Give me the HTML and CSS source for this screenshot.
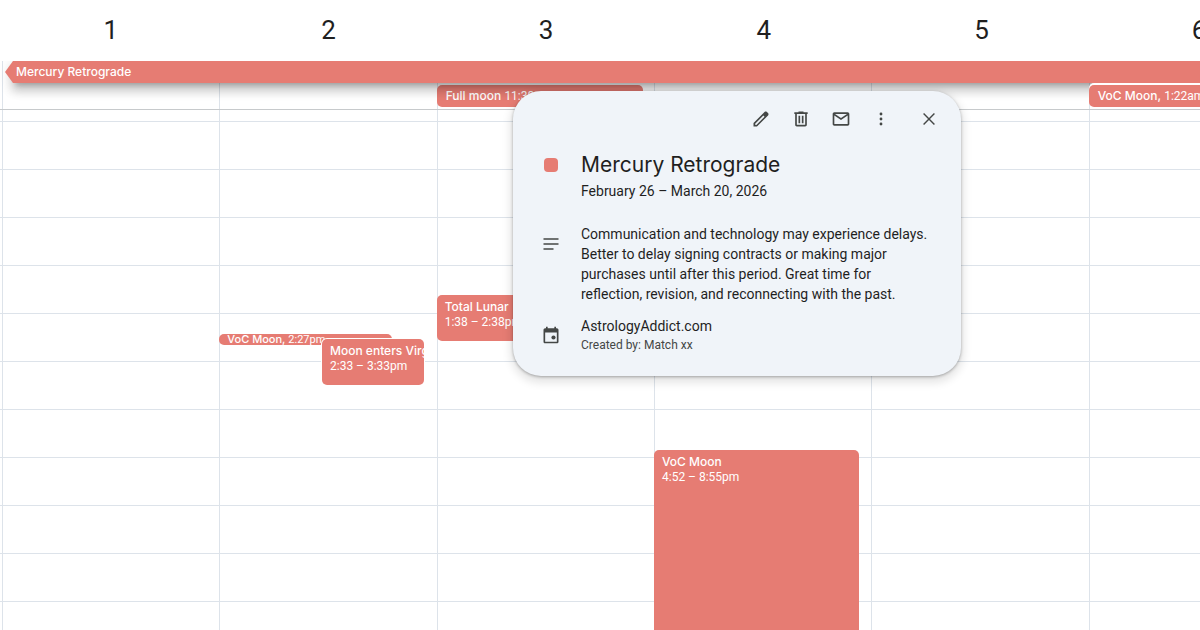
FILE: index.html
```html
<!DOCTYPE html>
<html lang="en">
<head>
    <meta charset="UTF-8">
    <meta name="viewport" content="width=device-width, initial-scale=1.0">
    <title>Calendar - March 2026</title>
    <link rel="stylesheet" href="styles.css">
</head>
<body>
    <main class="calendar">
        <!-- day numbers -->
        <div class="days week">
            <h2>1</h2>
            <h2>2</h2>
            <h2>3</h2>
            <h2>4</h2>
            <h2>5</h2>
            <h2>6</h2>
        </div>

        <!-- all day events -->
        <div class="allday">
            <div class="span-event">Mercury Retrograde</div>
            <div class="allday-row week">
                <div class="cell"></div>
                <div class="cell"></div>
                <div class="cell"><div class="chip">Full moon <span>11:38am</span></div></div>
                <div class="cell"></div>
                <div class="cell"></div>
                <div class="cell"><div class="chip chip-top">VoC Moon, <span>1:22am</span></div></div>
            </div>
        </div>

        <!-- hours -->
        <div class="hours">
            <div class="week">
                <div class="column"></div>
                <div class="column">
                    <div class="event event-short">VoC Moon, <span>2:27pm</span></div>
                    <div class="event event-virgo">Moon enters Virgo<br><span>2:33 – 3:33pm</span></div>
                </div>
                <div class="column">
                    <div class="event event-eclipse">Total Lunar<br><span>1:38 – 2:38pm</span></div>
                </div>
                <div class="column">
                    <div class="event event-voc">VoC Moon<br><span>4:52 – 8:55pm</span></div>
                </div>
                <div class="column"></div>
                <div class="column"></div>
            </div>
        </div>
    </main>

    <!-- event details -->
    <section class="popup" role="dialog" aria-labelledby="event-title">
        <div class="toolbar">
            <button type="button" aria-label="Edit event">
                <svg viewBox="0 0 24 24"><path d="M20.41 4.94l-1.35-1.35c-.78-.78-2.05-.78-2.83 0L3 16.82V21h4.18L20.41 7.77c.79-.78.79-2.05 0-2.83zm-14 14.12L5 19v-1.36l9.82-9.82 1.41 1.41-9.82 9.83z"/></svg>
            </button>
            <button type="button" aria-label="Delete event">
                <svg viewBox="0 0 24 24"><path d="M15 4V3H9v1H4v2h1v13c0 1.1.9 2 2 2h10c1.1 0 2-.9 2-2V6h1V4h-5zm2 15H7V6h10v13z"/><path d="M9 8h2v9H9zm4 0h2v9h-2z"/></svg>
            </button>
            <button type="button" aria-label="Email event details">
                <svg viewBox="0 0 24 24"><path d="M20 4H4c-1.1 0-2 .9-2 2v12c0 1.1.9 2 2 2h16c1.1 0 2-.9 2-2V6c0-1.1-.9-2-2-2zm-.8 2L12 10.8 4.8 6h14.4zM4 18V7.87l8 5.33 8-5.33V18H4z"/></svg>
            </button>
            <button type="button" aria-label="Options">
                <svg viewBox="0 0 24 24"><circle cx="12" cy="6" r="1.7"/><circle cx="12" cy="12" r="1.7"/><circle cx="12" cy="18" r="1.7"/></svg>
            </button>
            <button type="button" class="close" aria-label="Close">
                <svg viewBox="0 0 24 24"><path d="M5.5 5.5l13 13M18.5 5.5l-13 13" fill="none" stroke="#444746" stroke-width="1.7"/></svg>
            </button>
        </div>
        <div class="details">
            <div class="color-dot"></div>
            <div>
                <h1 id="event-title">Mercury Retrograde</h1>
                <p>February 26 – March 20, 2026</p>
            </div>

            <svg class="icon-notes" viewBox="0 0 24 24"><path d="M3 5h18v2H3zM3 11h18v2H3zM3 17h12v2H3z"/></svg>
            <p>Communication and technology may experience delays. Better to delay signing contracts or making major purchases until after this period. Great time for reflection, revision, and reconnecting with the past.</p>

            <svg class="icon-calendar" viewBox="0 0 24 24"><path d="M19 4h-1V2h-2v2H8V2H6v2H5c-1.1 0-2 .9-2 2v14c0 1.1.9 2 2 2h14c1.1 0 2-.9 2-2V6c0-1.1-.9-2-2-2zm0 16H5V9h14v11z"/><circle cx="15" cy="15" r="2.5"/></svg>
            <div>
                <p>AstrologyAddict.com</p>
                <p class="creator">Created by: Match xx</p>
            </div>
        </div>
    </section>
</body>
</html>
```
FILE: styles.css
```css
* {
    box-sizing: border-box;
}

body, html {
    height: 100%;
    margin: 0;
}

body {
    position: relative;
    overflow: hidden;
    background-color: #fff;
    color: #1f1f1f;
    font-family: Roboto, "Liberation Sans", sans-serif;
    font-size: 14px;
    line-height: 20px;
}

h1, h2, p {
    margin: 0;
    font-weight: 400;
}

.calendar {
    display: flex;
    flex-direction: column;
    height: 100%;
    overflow: hidden;
}

/* six columns, the last one runs off the right edge */
.week {
    display: grid;
    grid-template-columns: repeat(6, 1fr);
    width: calc(109% - 2px);
    padding-left: 2px;
}

.days {
    position: relative;
    z-index: 3;
    width: 109%;
    padding-left: 2px;
    background-color: #fff;
}

.days h2 {
    padding-bottom: 1px;
    font-size: 26px;
    line-height: 60px;
    text-align: center;
}

.allday {
    display: grid;
    border-bottom: 1px solid #c7cacc;
}

.span-event,
.allday-row {
    grid-column: 1;
    grid-row: 1;
}

.span-event {
    position: relative;
    z-index: 1;
    height: 22px;
    margin-left: 13px;
    padding-left: 3px;
    background-color: #e67c73;
    box-shadow: 0 8px 10px 1px rgba(0, 0, 0, 0.14), 0 3px 14px 2px rgba(0, 0, 0, 0.12), 0 5px 5px -3px rgba(0, 0, 0, 0.2);
    color: #fff;
    font-family: Inter, sans-serif;
    font-size: 12px;
    font-weight: 500;
    line-height: 22px;
}

.span-event::before {
    content: "";
    position: absolute;
    top: 0;
    right: 100%;
    width: 8px;
    height: 22px;
    background-color: #e67c73;
    clip-path: polygon(100% 0, 100% 100%, 0 50%);
}

.cell {
    height: 48px;
    padding-top: 24px;
    border-left: 1px solid #dde3ea;
}

.chip {
    width: calc(100% - 10px);
    height: 22px;
    margin-left: -1px;
    padding-left: 9px;
    border-radius: 5px;
    background-color: #e67c73;
    color: #fff;
    font-family: Inter, sans-serif;
    font-size: 12px;
    font-weight: 500;
    line-height: 22px;
}

.chip-top {
    position: relative;
    z-index: 2;
    box-shadow: 0 -2px #fff;
}

.chip span,
.event span {
    font-family: Roboto, sans-serif;
    font-weight: 400;
}

.hours {
    flex: 1;
    display: flex;
    min-height: 0;
    background-image: linear-gradient(#dde3ea 1px, transparent 1px);
    background-size: 100% 48px;
    background-position: 0 11px;
}

.hours .week {
    flex: none;
}

.column {
    position: relative;
    border-left: 1px solid #dde3ea;
}

.event {
    position: absolute;
    left: -1px;
    width: calc(100% - 11px);
    height: 46px;
    padding: 4px 0 0 8px;
    border-radius: 5px;
    overflow: hidden;
    background-color: #e67c73;
    color: #fff;
    font-family: Inter, sans-serif;
    font-size: 12px;
    font-weight: 500;
    line-height: 15px;
    white-space: nowrap;
}

.event-short {
    top: 224px;
    width: 80%;
    height: 11px;
    padding-top: 0;
    font-size: 11px;
    line-height: 11px;
}

.event-virgo {
    top: 229px;
    left: 47%;
    width: 47%;
    box-shadow: 0 0 0 1px #fff;
}

.event-eclipse {
    top: 185px;
}

.event-voc {
    top: 340px;
    height: 195px;
}

.popup {
    position: absolute;
    z-index: 5;
    top: 91px;
    left: 513px;
    width: 448px;
    padding: 8px 12px 22px 20px;
    border-radius: 28px;
    background-color: #f0f4f9;
    box-shadow: 0 4px 8px 3px rgba(0, 0, 0, 0.1), 0 1px 3px rgba(0, 0, 0, 0.3);
}

.toolbar {
    display: flex;
    justify-content: flex-end;
}

.toolbar button {
    display: flex;
    align-items: center;
    justify-content: center;
    width: 40px;
    height: 40px;
    padding: 0;
    border: none;
    border-radius: 50%;
    background: none;
    cursor: pointer;
}

.toolbar button:hover {
    background-color: #e1e5ea;
}

.toolbar .close {
    margin-left: 8px;
}

svg {
    width: 20px;
    height: 20px;
    fill: #444746;
}

.details {
    display: grid;
    grid-template-columns: 36px 1fr;
    column-gap: 12px;
    padding: 12px 16px 0 0;
}

.details > :nth-child(odd) {
    justify-self: center;
}

.details h1 {
    margin-bottom: 2px;
    font-family: Inter, sans-serif;
    font-size: 21px;
    line-height: 28px;
}

.color-dot {
    width: 14px;
    height: 14px;
    margin-top: 7px;
    border-radius: 4px;
    background-color: #e67c73;
}

.details > p {
    margin: 23px 0 12px;
}

.icon-notes {
    margin-top: 33px;
}

.icon-calendar {
    margin-top: 9px;
}

.details .creator {
    color: #444746;
    font-size: 12px;
    line-height: 18px;
}
```
